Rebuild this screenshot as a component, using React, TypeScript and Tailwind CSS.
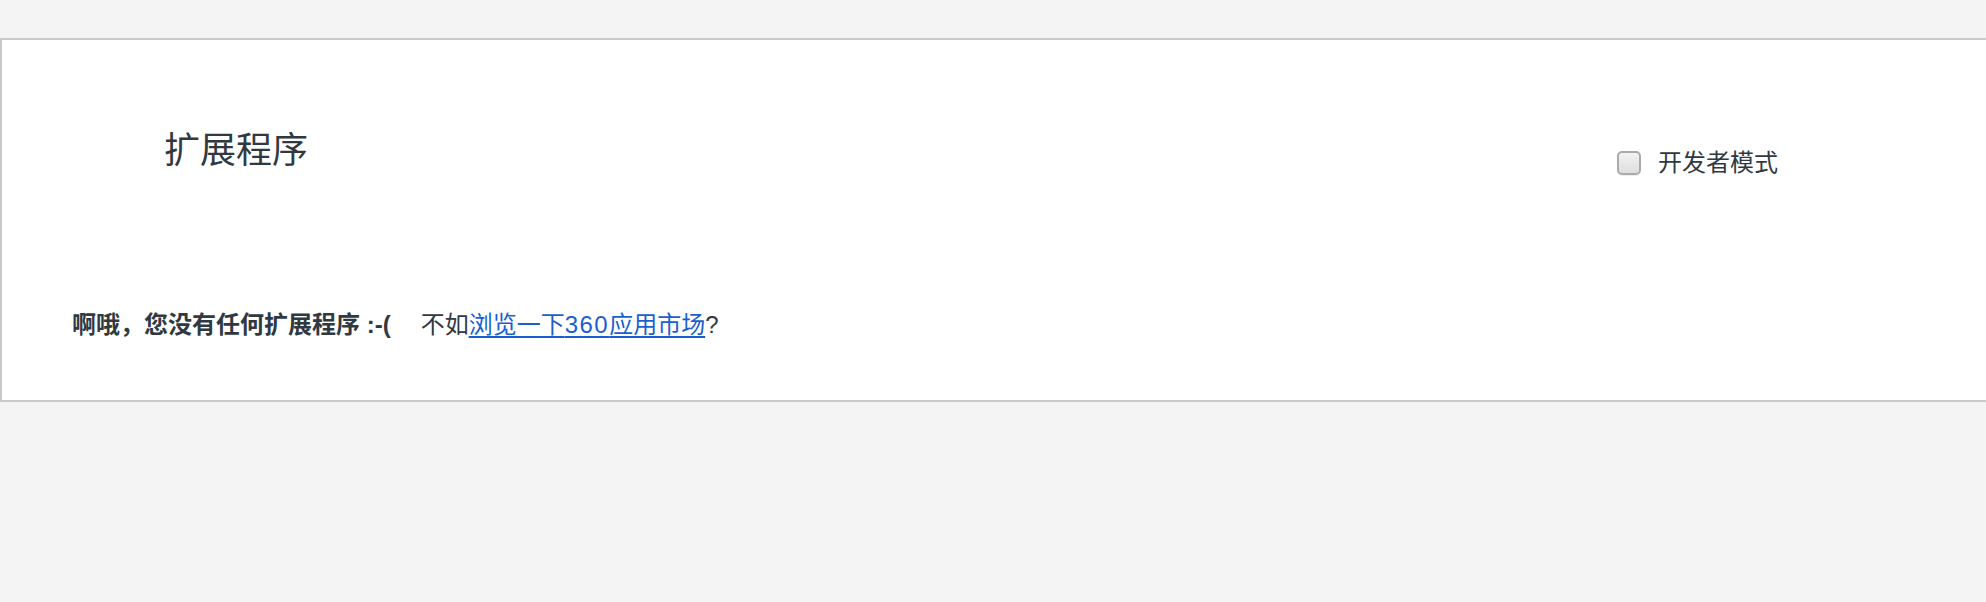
export default function App() {
  return (
    <div
      className="h-[602px] overflow-hidden bg-[#f4f4f4] pt-[38px] text-[#303942]"
      style={{ fontFamily: '"Liberation Sans", "Noto Sans CJK SC", sans-serif' }}
    >
      {/* Extensions card */}
      <div className="h-[364px] w-[2100px] border-2 border-r-0 border-[#c9c9c9] bg-white">
        {/* Header */}
        <div className="flex items-start pl-[162px] pt-[93px]">
          <h1 className="w-[1453px] flex-none text-[36px] font-normal leading-[36px]">扩展程序</h1>
          <label className="mt-[17px] flex h-[26px] items-center">
            <span className="h-[24px] w-[24px] rounded-[5px] border-2 border-[#ababab] bg-gradient-to-b from-[#f2f2f2] to-[#dedede] shadow-[0_1px_1px_rgba(0,0,0,0.08)]" />
            <span className="ml-[17px] text-[24px] leading-[24px]">开发者模式</span>
          </label>
        </div>

        {/* Empty message */}
        <p className="mt-[137px] pl-[70px] text-[24px] leading-[24px]">
          <span className="font-bold">啊哦，您没有任何扩展程序 :-(</span>
          <span className="ml-[30px]">
            不如
            <a href="#" className="text-[#1a5fd0] underline decoration-[2px] underline-offset-[3px]">
              浏览一下<span className="tracking-[1.5px]">360</span>应用市场
            </a>
            ?
          </span>
        </p>
      </div>
    </div>
  );
}
